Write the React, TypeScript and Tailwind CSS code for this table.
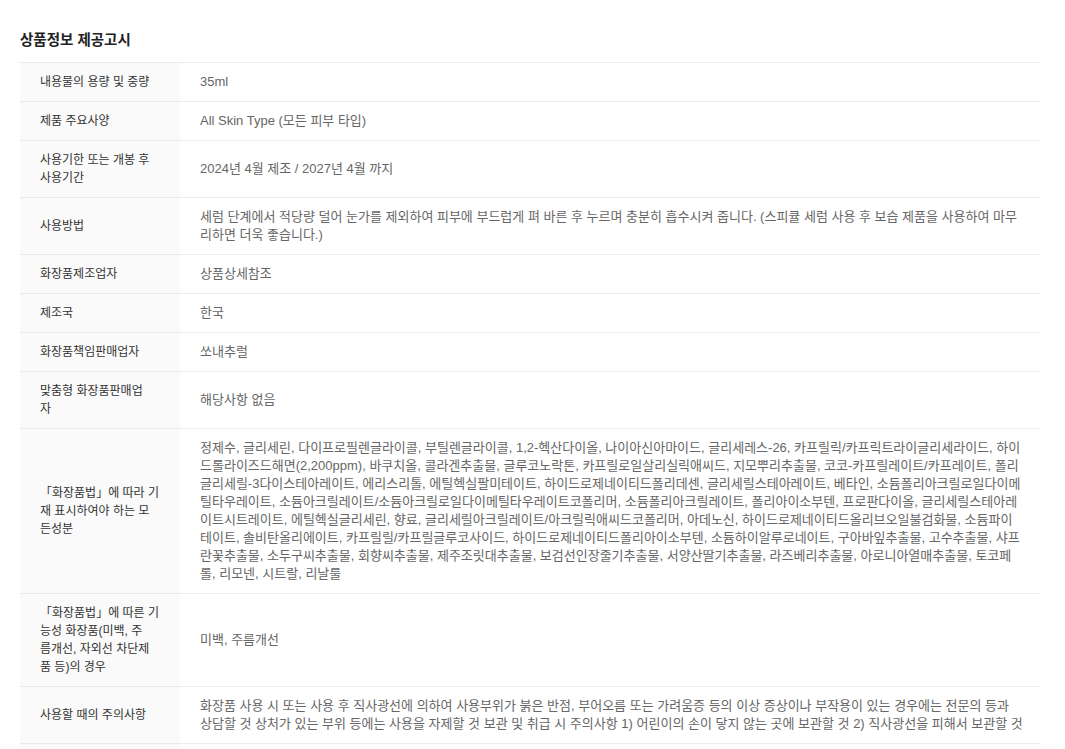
// 줄바꿈 위치는 원본 화면 기준으로 맞춤
const rows: { label: string[]; value: string[] }[] = [
  { label: ["내용물의 용량 및 중량"], value: ["35ml"] },
  { label: ["제품 주요사양"], value: ["All Skin Type (모든 피부 타입)"] },
  { label: ["사용기한 또는 개봉 후", "사용기간"], value: ["2024년 4월 제조 / 2027년 4월 까지"] },
  {
    label: ["사용방법"],
    value: [
      "세럼 단계에서 적당량 덜어 눈가를 제외하여 피부에 부드럽게 펴 바른 후 누르며 충분히 흡수시켜 줍니다. (스피큘 세럼 사용 후 보습 제품을 사용하여 마무",
      "리하면 더욱 좋습니다.)",
    ],
  },
  { label: ["화장품제조업자"], value: ["상품상세참조"] },
  { label: ["제조국"], value: ["한국"] },
  { label: ["화장품책임판매업자"], value: ["쏘내추럴"] },
  { label: ["맞춤형 화장품판매업", "자"], value: ["해당사항 없음"] },
  {
    label: ["「화장품법」에 따라 기", "재 표시하여야 하는 모", "든성분"],
    value: [
      "정제수, 글리세린, 다이프로필렌글라이콜, 부틸렌글라이콜, 1,2-헥산다이올, 나이아신아마이드, 글리세레스-26, 카프릴릭/카프릭트라이글리세라이드, 하이",
      "드롤라이즈드해면(2,200ppm), 바쿠치올, 콜라겐추출물, 글루코노락톤, 카프릴로일살리실릭애씨드, 지모뿌리추출물, 코코-카프릴레이트/카프레이트, 폴리",
      "글리세릴-3다이스테아레이트, 에리스리톨, 에틸헥실팔미테이트, 하이드로제네이티드폴리데센, 글리세릴스테아레이트, 베타인, 소듐폴리아크릴로일다이메",
      "틸타우레이트, 소듐아크릴레이트/소듐아크릴로일다이메틸타우레이트코폴리머, 소듐폴리아크릴레이트, 폴리아이소부텐, 프로판다이올, 글리세릴스테아레",
      "이트시트레이트, 에틸헥실글리세린, 향료, 글리세릴아크릴레이트/아크릴릭애씨드코폴리머, 아데노신, 하이드로제네이티드올리브오일불검화물, 소듐파이",
      "테이트, 솔비탄올리에이트, 카프릴릴/카프릴글루코사이드, 하이드로제네이티드폴리아이소부텐, 소듐하이알루로네이트, 구아바잎추출물, 고수추출물, 샤프",
      "란꽃추출물, 소두구씨추출물, 회향씨추출물, 제주조릿대추출물, 보검선인장줄기추출물, 서양산딸기추출물, 라즈베리추출물, 아로니아열매추출물, 토코페",
      "롤, 리모넨, 시트랄, 리날룰",
    ],
  },
  {
    label: ["「화장품법」에 따른 기", "능성 화장품(미백, 주", "름개선, 자외선 차단제", "품 등)의 경우"],
    value: ["미백, 주름개선"],
  },
  {
    label: ["사용할 때의 주의사항"],
    value: [
      "화장품 사용 시 또는 사용 후 직사광선에 의하여 사용부위가 붉은 반점, 부어오름 또는 가려움증 등의 이상 증상이나 부작용이 있는 경우에는 전문의 등과",
      "상담할 것 상처가 있는 부위 등에는 사용을 자제할 것 보관 및 취급 시 주의사항 1) 어린이의 손이 닿지 않는 곳에 보관할 것 2) 직사광선을 피해서 보관할 것",
    ],
  },
  {
    label: ["품질보증기준"],
    value: ["공정거래위원회 고시 소비자분쟁해결기준에 의거 교환 또는 보상"],
  },
];

function Lines({ lines }: { lines: string[] }) {
  return (
    <span>
      {lines.map((line, j) => (
        <span key={j}>
          {j > 0 && <br />}
          {line}
        </span>
      ))}
    </span>
  );
}

export default function App() {
  return (
    <div
      className="min-h-screen bg-white px-5 pt-[30px] pb-10"
      style={{ fontFamily: '"Liberation Sans", "Noto Sans CJK KR", sans-serif' }}
    >
      <h2 className="mb-3 text-[14.5px] font-bold leading-5 text-[#222]">
        상품정보 제공고시
      </h2>

      <div className="w-[1020px] border-t border-[#ebebeb]">
        {rows.map((row, i) => (
          <div key={i} className="grid grid-cols-[160px_1fr] border-b border-[#ebebeb]">
            <div className="flex items-center bg-[#fafafa] px-5 py-[10px] text-[12px] leading-[18px] whitespace-nowrap text-[#333]">
              <Lines lines={row.label} />
            </div>
            <div className="flex items-center px-5 py-[10px] text-[13px] leading-[18px] whitespace-nowrap text-[#666]">
              <Lines lines={row.value} />
            </div>
          </div>
        ))}
      </div>
    </div>
  );
}
